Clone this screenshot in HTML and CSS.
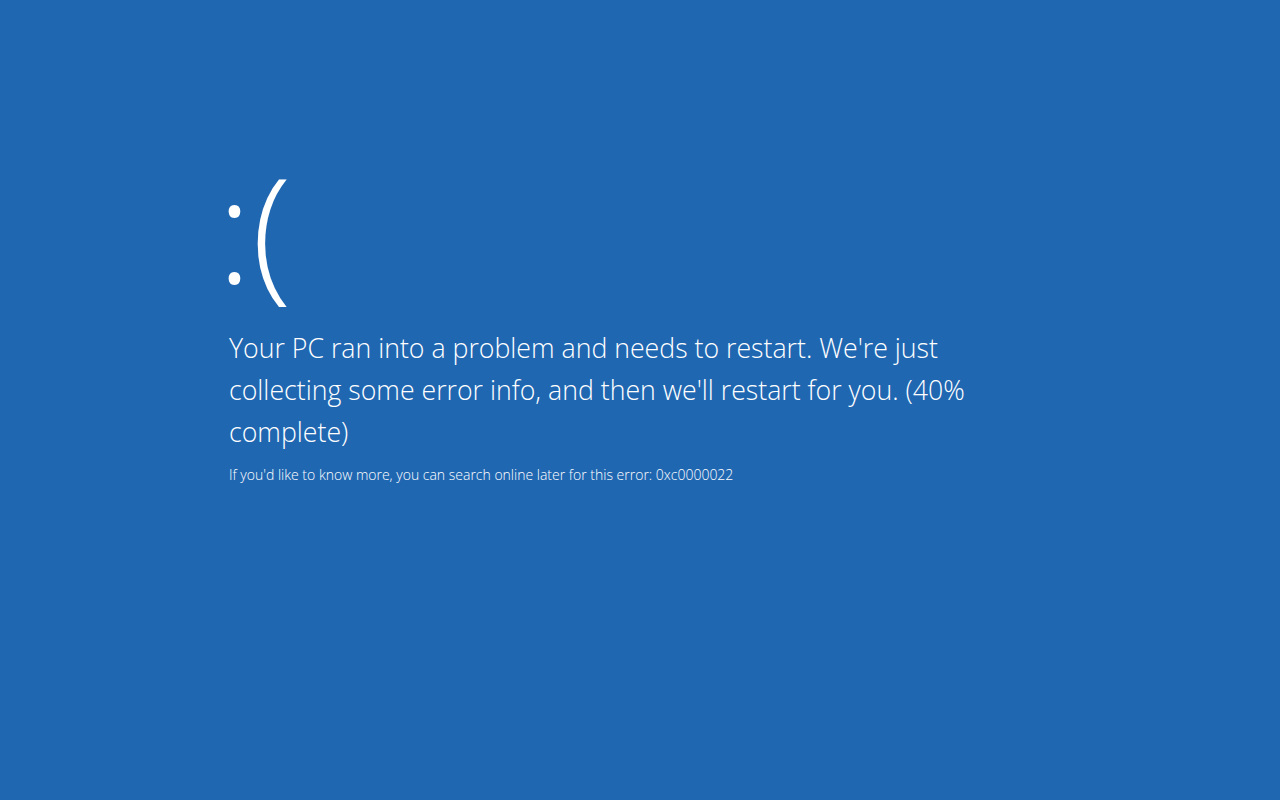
FILE: index.html
```html
<!DOCTYPE html>
<html lang="en">
<head>
    <meta charset="UTF-8">
    <title>Your PC ran into a problem</title>
    <link rel="stylesheet" href="styles.css">
</head>
<body>
    <div class="screen">
        <div class="frown">:(</div>
        <p class="message">Your PC ran into a problem and needs to restart. We're just collecting some error info, and then we'll restart for you. (40% complete)</p>
        <p class="details">If you'd like to know more, you can search online later for this error: 0xc0000022</p>
    </div>
</body>
</html>
```

FILE: styles.css
```css
html, body {
    margin: 0;
    height: 100%;
}
body {
    background: #2067b2;
    color: #ffffff;
    font-family: "Open Sans", "Noto Sans", sans-serif;
    font-weight: 300;
}
.screen {
    padding: 128px 0 0 229px;
    width: 760px;
}
.frown {
    font-size: 146px;
    line-height: 199px;
    margin-left: -12px;
}
.message {
    font-size: 26.7px;
    line-height: 42px;
    margin: 0;
}
.details {
    font-size: 14px;
    line-height: 20px;
    margin: 12px 0 0;
}
```
